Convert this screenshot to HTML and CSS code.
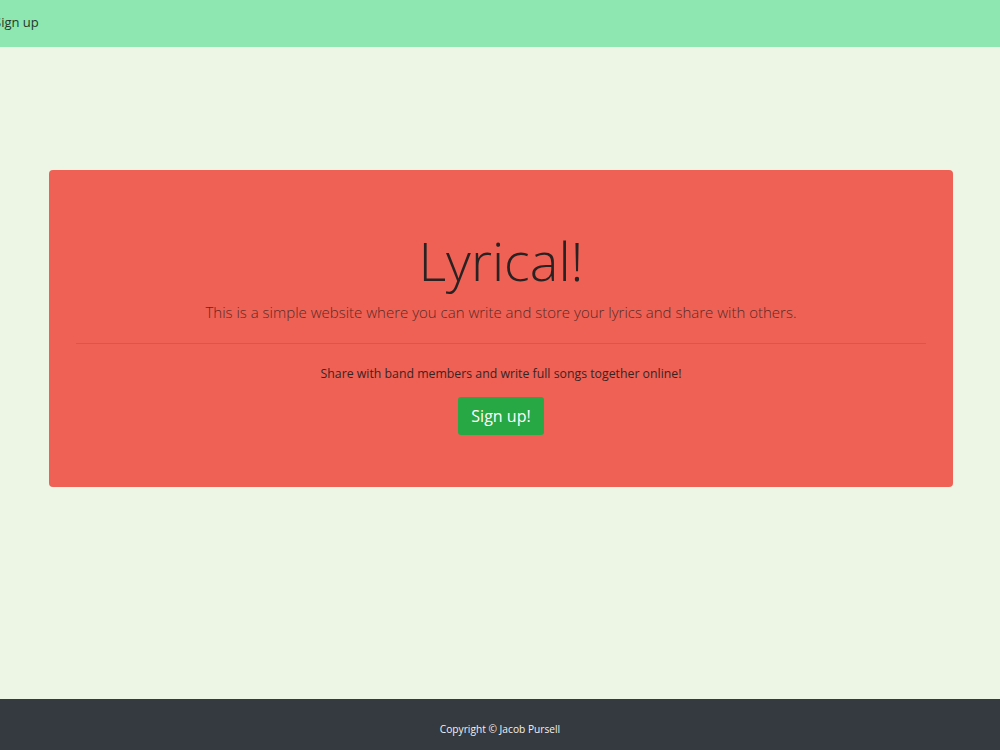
FILE: index.html
```html
<!DOCTYPE html>
<html lang="en">
<head>
<meta charset="utf-8">
<title>Lyrical!</title>
<link rel="stylesheet" href="styles.css">
</head>
<body>
<nav class="navbar">
  <a class="nav-link" href="#">Sign up</a>
</nav>
<main class="main">
  <section class="jumbotron">
    <h1 class="title">Lyrical!</h1>
    <p class="lead">This is a simple website where you can write and store your lyrics and share with others.</p>
    <hr class="divider">
    <p class="text">Share with band members and write full songs together online!</p>
    <a class="btn" href="#">Sign up!</a>
  </section>
</main>
<footer class="footer">
  <p class="copy">Copyright © Jacob Pursell</p>
</footer>
</body>
</html>
```
FILE: styles.css
```css
* { box-sizing: border-box; }
html, body { height: 100%; }
body {
  margin: 0;
  min-height: 100vh;
  display: flex;
  flex-direction: column;
  background: #edf5e5;
  font-family: "Open Sans", "Noto Sans", sans-serif;
  color: #212529;
}
.navbar {
  height: 47px;
  background: #8ee6b0;
  display: flex;
  align-items: center;
  flex-shrink: 0;
}
.nav-link {
  margin-left: -6px;
  margin-bottom: 4px;
  font-size: 13px;
  color: #1f3a2a;
  text-decoration: none;
}
.main {
  flex: 1;
  padding: 123px 47px 0 49px;
}
.jumbotron {
  background: #ef6154;
  border-radius: 4px;
  height: 317px;
  padding: 54px 27px 0;
  text-align: center;
}
.title {
  margin: 0 0 4px;
  font-size: 54px;
  font-weight: 300;
  line-height: 72px;
  color: #2a2222;
}
.lead {
  margin: 0;
  font-size: 15px;
  font-weight: 300;
  line-height: 24px;
  color: #5a2a24;
}
.divider {
  margin: 19px 0 20px;
  border: 0;
  border-top: 1px solid #dc5549;
}
.text {
  margin: 0 0 13px;
  font-size: 12.3px;
  line-height: 20px;
  color: #3a2422;
}
.btn {
  display: inline-block;
  height: 38px;
  width: 86px;
  line-height: 38px;
  background: #28a745;
  color: #fff;
  border-radius: 3px;
  font-size: 16px;
  text-decoration: none;
}
.footer {
  height: 51px;
  background: #343a40;
  display: flex;
  align-items: center;
  justify-content: center;
  flex-shrink: 0;
}
.copy {
  margin: 8px 0 0;
  font-size: 10.2px;
  color: #f2f2f2;
}
```
